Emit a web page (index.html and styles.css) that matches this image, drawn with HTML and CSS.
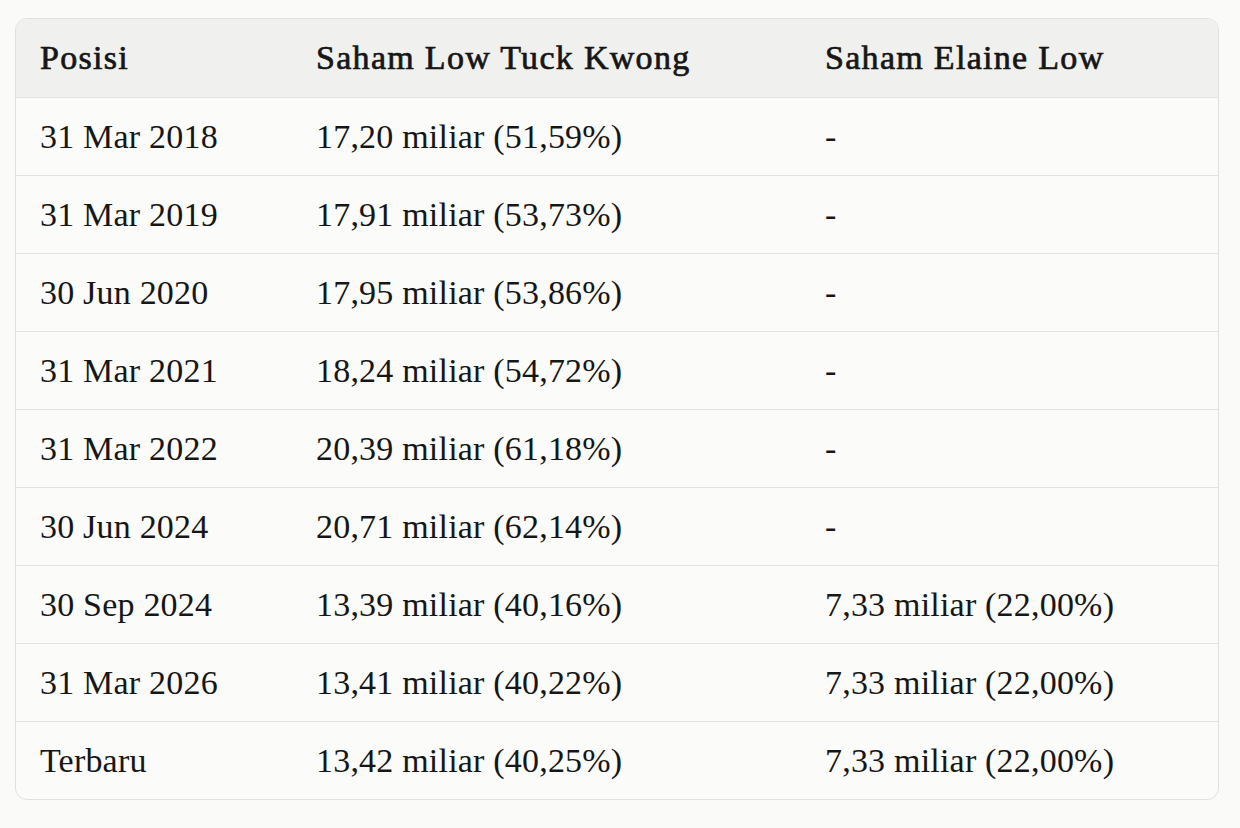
FILE: index.html
```html
<!DOCTYPE html>
<html lang="id">
<head>
<meta charset="utf-8">
<title>Kepemilikan Saham</title>
<link rel="stylesheet" href="styles.css">
</head>
<body>
<div class="page">
  <div class="table-wrap">
    <table class="holdings">
      <colgroup>
        <col class="c1"><col class="c2"><col class="c3">
      </colgroup>
      <thead>
        <tr><th>Posisi</th><th>Saham Low Tuck Kwong</th><th>Saham Elaine Low</th></tr>
      </thead>
      <tbody>
        <tr><td>31 Mar 2018</td><td>17,20 miliar (51,59%)</td><td>-</td></tr>
        <tr><td>31 Mar 2019</td><td>17,91 miliar (53,73%)</td><td>-</td></tr>
        <tr><td>30 Jun 2020</td><td>17,95 miliar (53,86%)</td><td>-</td></tr>
        <tr><td>31 Mar 2021</td><td>18,24 miliar (54,72%)</td><td>-</td></tr>
        <tr><td>31 Mar 2022</td><td>20,39 miliar (61,18%)</td><td>-</td></tr>
        <tr><td>30 Jun 2024</td><td>20,71 miliar (62,14%)</td><td>-</td></tr>
        <tr><td>30 Sep 2024</td><td>13,39 miliar (40,16%)</td><td>7,33 miliar (22,00%)</td></tr>
        <tr><td>31 Mar 2026</td><td>13,41 miliar (40,22%)</td><td>7,33 miliar (22,00%)</td></tr>
        <tr><td>Terbaru</td><td>13,42 miliar (40,25%)</td><td>7,33 miliar (22,00%)</td></tr>
      </tbody>
    </table>
  </div>
</div>
</body>
</html>
```

FILE: styles.css
```css
html, body {
  margin: 0;
  padding: 0;
  background: #fafaf8;
}
.page {
  padding: 18px 21px 0 15px;
}
.table-wrap {
  border: 1px solid #e0e0de;
  border-radius: 12px;
  overflow: hidden;
  background: #fbfbf9;
}
.holdings {
  width: 100%;
  border-collapse: separate;
  border-spacing: 0;
  font-family: "Liberation Serif", "Times New Roman", serif;
  font-size: 34px;
  letter-spacing: 0.2px;
  color: #161616;
  table-layout: fixed;
}
.c1 { width: 276px; }
.c2 { width: 509px; }
.holdings th,
.holdings td {
  text-align: left;
  padding: 0 0 0 24px;
  height: 77px;
  line-height: 1;
  vertical-align: middle;
  border-bottom: 1px solid #e3e3e1;
  white-space: nowrap;
}
.holdings th {
  font-weight: 400;
  letter-spacing: 1.3px;
  -webkit-text-stroke: 0.7px #161616;
  background: #f0f0ef;
  height: 78px;
}
.holdings tbody tr:last-child td {
  border-bottom: none;
}
```
